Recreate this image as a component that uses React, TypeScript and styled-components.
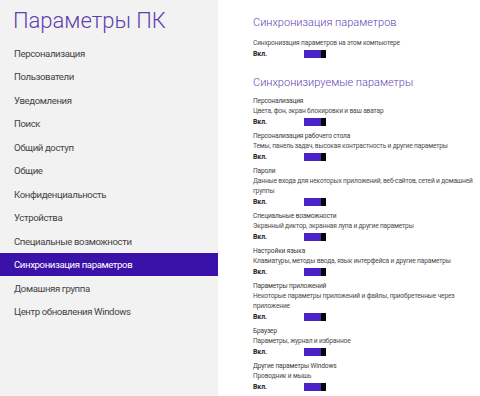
import React from "react";
import styled, { createGlobalStyle } from "styled-components";

const Global = createGlobalStyle`
  html, body { margin: 0; padding: 0; background: #fff; }
  body { width: 480px; height: 396px; overflow: hidden; font-family: Roboto, "Noto Sans", sans-serif; }
  * { box-sizing: border-box; }
`;

const Page = styled.div`
  display: flex;
  width: 480px;
  height: 396px;
`;

const Sidebar = styled.nav`
  width: 218px;
  flex: none;
  background: #f2f2f2;
  display: flex;
  flex-direction: column;
`;

const Title = styled.h1`
  margin: 0;
  height: 41.25px;
  padding: 6px 0 0 13px;
  font-size: 22px;
  line-height: 30px;
  font-weight: 300;
  color: #5c41b0;
`;

const NavItem = styled.div<{ $active?: boolean }>`
  height: 23.5px;
  display: flex;
  align-items: center;
  padding-left: 14px;
  font-size: 9.6px;
  letter-spacing: -0.38px;
  color: ${(p) => (p.$active ? "#ffffff" : "#444444")};
  background: ${(p) => (p.$active ? "#3b12a9" : "transparent")};
  white-space: nowrap;
`;

const Main = styled.main`
  flex: 1;
  padding: 13px 4px 0 35px;
  display: flex;
  flex-direction: column;
`;

const Heading = styled.h2<{ $gapTop?: number }>`
  margin: ${(p) => p.$gapTop ?? 0}px 0 0 0;
  font-size: 11px;
  line-height: 20px;
  font-weight: 300;
  color: #5f45b2;
  white-space: nowrap;
`;

const Group = styled.div`
  display: flex;
  flex-direction: column;
  margin-bottom: 4px;
`;

const Label = styled.div`
  font-size: 6.6px;
  letter-spacing: -0.15px;
  line-height: 10px;
  color: #3a3a3a;
  white-space: nowrap;
`;

const Desc = styled.div<{ $gapTop?: number }>`
  margin-top: ${(p) => p.$gapTop ?? 0}px;
  font-size: 6.6px;
  letter-spacing: -0.15px;
  line-height: 10px;
  color: #4a4a4a;
  white-space: nowrap;
`;

const ToggleRow = styled.div`
  margin-top: 1px;
  height: 10px;
  display: flex;
  align-items: center;
`;

const StateText = styled.span`
  width: 51px;
  font-size: 6.8px;
  font-weight: 700;
  color: #222;
`;

const Track = styled.span`
  display: flex;
  width: 22px;
  height: 8px;
  background: #4a22c6;
  justify-content: flex-end;
`;

const Thumb = styled.span`
  width: 5px;
  height: 8px;
  background: #050505;
`;

const Spacer = styled.div`
  height: 3px;
`;

const Toggle = () => (
  <ToggleRow>
    <StateText>Вкл.</StateText>
    <Track>
      <Thumb />
    </Track>
  </ToggleRow>
);

const nav = [
  "Персонализация",
  "Пользователи",
  "Уведомления",
  "Поиск",
  "Общий доступ",
  "Общие",
  "Конфиденциальность",
  "Устройства",
  "Специальные возможности",
  "Синхронизация параметров",
  "Домашняя группа",
  "Центр обновления Windows",
];

const groups: [string, string[]][] = [
  ["Персонализация", ["Цвета, фон, экран блокировки и ваш аватар"]],
  ["Персонализация рабочего стола", ["Темы, панель задач, высокая контрастность и другие параметры"]],
  ["Пароли", ["Данные входа для некоторых приложений, веб-сайтов, сетей и домашней", "группы"]],
  ["Специальные возможности", ["Экранный диктор, экранная лупа и другие параметры"]],
  ["Настройки языка", ["Клавиатуры, методы ввода, язык интерфейса и другие параметры"]],
  ["Параметры приложений", ["Некоторые параметры приложений и файлы, приобретенные через", "приложение"]],
  ["Браузер", ["Параметры, журнал и избранное"]],
  ["Другие параметры Windows", ["Проводник и мышь"]],
];

export default function App() {
  return (
    <>
      <Global />
      <Page>
        <Sidebar>
          <Title>Параметры ПК</Title>
          {nav.map((n) => (
            <NavItem key={n} $active={n === "Синхронизация параметров"}>
              {n}
            </NavItem>
          ))}
        </Sidebar>
        <Main>
          <Heading>Синхронизация параметров</Heading>
          <Group>
            <Desc $gapTop={5}>Синхронизация параметров на этом компьютере</Desc>
            <Toggle />
          </Group>
          <Heading $gapTop={10}>Синхронизируемые параметры</Heading>
          <Spacer />
          {groups.map(([l, lines]) => (
            <Group key={l}>
              <Label>{l}</Label>
              {lines.map((d) => (
                <Desc key={d}>{d}</Desc>
              ))}
              <Toggle />
            </Group>
          ))}
        </Main>
      </Page>
    </>
  );
}
